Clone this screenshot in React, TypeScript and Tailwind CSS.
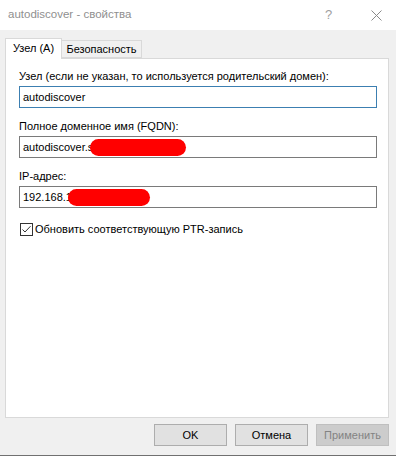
import { memo } from "react";

type FieldProps = {
  label: string;
  focused?: boolean;
  children: React.ReactNode;
};

function Field({ label, focused = false, children }: FieldProps) {
  return (
    <div className="flex flex-col">
      <div className="h-[15px] leading-[15px] mb-[2px] text-black">{label}</div>
      <div
        className={
          focused
            ? "w-[358px] h-[22px] border border-[#3c7fb1] bg-white flex items-center pl-[3px] text-black"
            : "w-[358px] h-[22px] border border-[#7a7a7a] bg-white flex items-center pl-[3px] text-black"
        }
      >
        {children}
      </div>
    </div>
  );
}

function Redact({ width }: { width: string }) {
  return <span className={`inline-block h-[17px] rounded-full bg-[#ff0000] ${width}`} />;
}

function App() {
  return (
    <div className="w-[396px] h-[456px] bg-[#f0f0f0] flex flex-col font-['Liberation_Sans',Arial,sans-serif] text-[11px] border-b border-[#707070]">
      {/* title bar */}
      <div className="h-[30px] bg-white flex items-center pl-[8px] text-[#8f8f8f]">
        <span className="flex-1 text-[11.5px]">autodiscover - свойства</span>
        <span className="w-[10px] text-[13px] text-[#a0a0a0] mr-[36px]">?</span>
        <svg width="11" height="11" viewBox="0 0 11 11" className="mr-[14px]">
          <path d="M0.5 0.5 L10.5 10.5 M10.5 0.5 L0.5 10.5" stroke="#8a8a8a" strokeWidth="1" fill="none" />
        </svg>
      </div>

      <div className="flex-1 flex flex-col pl-[5px] pt-[8px]">
        {/* tabs */}
        <div className="flex items-end h-[20px]">
          <div className="relative z-10 -mb-px w-[57px] h-[21px] bg-white border border-b-0 border-[#d9d9d9] flex items-center justify-center text-black pb-[1px]">
            Узел (A)
          </div>
          <div className="w-[80px] h-[18px] bg-[#f0f0f0] border border-l-0 border-[#d9d9d9] flex items-center justify-center text-black">
            Безопасность
          </div>
        </div>

        {/* panel */}
        <div className="w-[384px] h-[360px] bg-white border border-[#d9d9d9] pl-[13px] pt-[10px] flex flex-col gap-[11px]">
          <Field label="Узел (если не указан, то используется родительский домен):" focused>
            autodiscover
          </Field>
          <Field label="Полное доменное имя (FQDN):">
            <span>autodiscover.s</span>
            <span className="-ml-[3px] flex">
              <Redact width="w-[96px]" />
            </span>
          </Field>
          <Field label="IP-адрес:">
            <span>192.168.1</span>
            <span className="-ml-[4px] flex">
              <Redact width="w-[82px]" />
            </span>
          </Field>
          <label className="flex items-center mt-[2px] text-black">
            <svg width="13" height="13" viewBox="0 0 13 13" className="ml-[1px] mr-[2px]">
              <rect x="0.5" y="0.5" width="12" height="12" fill="white" stroke="#333333" />
              <path d="M2.5 6.5 L5 9 L10.5 3.2" stroke="#333333" strokeWidth="1" fill="none" />
            </svg>
            Обновить соответствующую PTR-запись
          </label>
        </div>

        {/* buttons */}
        <div className="flex justify-end gap-[8px] pr-[7px] mt-[6px]">
          <button className="w-[73px] h-[22px] bg-[#e1e1e1] border border-[#adadad] text-black">OK</button>
          <button className="w-[73px] h-[22px] bg-[#e1e1e1] border border-[#adadad] text-black">Отмена</button>
          <button className="w-[73px] h-[22px] bg-[#cccccc] border border-[#bfbfbf] text-[#838383]" disabled>
            Применить
          </button>
        </div>
      </div>
    </div>
  );
}

export default memo(App);
